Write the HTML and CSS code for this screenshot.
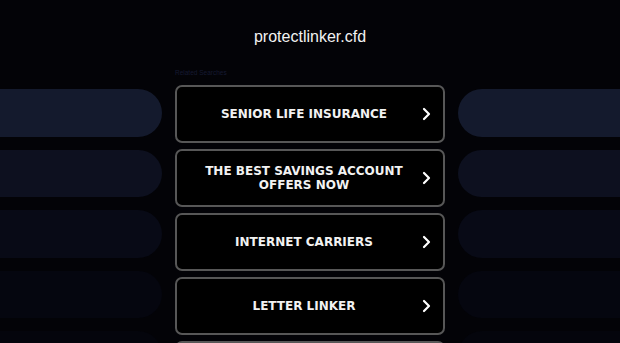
FILE: index.html
```html
<!doctype html>
<html lang="en">
<head>
    <meta charset="utf-8">
    <meta name="viewport" content="width=device-width, initial-scale=1">
    <title>protectlinker.cfd</title>
    <link rel="stylesheet" href="styles.css">
</head>
<body>

    <header class="header">
        <h1 class="domain">protectlinker.cfd</h1>
    </header>

    <div class="layout">
        <div class="side side-left">
            <div class="pill p1"></div>
            <div class="pill p2"></div>
            <div class="pill p3"></div>
            <div class="pill p4"></div>
            <div class="pill p5"></div>
        </div>

        <div class="links">
            <div class="links-title">Related Searches</div>
            <a href="#" class="link-btn">
                <span class="link-text">Senior Life Insurance</span>
                <svg class="chevron" viewBox="0 0 10 14" width="10" height="14"><path d="M3 2 L8 7 L3 12" fill="none" stroke="#fff" stroke-width="2.2" stroke-linecap="round" stroke-linejoin="round"/></svg>
            </a>
            <a href="#" class="link-btn">
                <span class="link-text">The Best Savings Account Offers Now</span>
                <svg class="chevron" viewBox="0 0 10 14" width="10" height="14"><path d="M3 2 L8 7 L3 12" fill="none" stroke="#fff" stroke-width="2.2" stroke-linecap="round" stroke-linejoin="round"/></svg>
            </a>
            <a href="#" class="link-btn">
                <span class="link-text">Internet Carriers</span>
                <svg class="chevron" viewBox="0 0 10 14" width="10" height="14"><path d="M3 2 L8 7 L3 12" fill="none" stroke="#fff" stroke-width="2.2" stroke-linecap="round" stroke-linejoin="round"/></svg>
            </a>
            <a href="#" class="link-btn">
                <span class="link-text">Letter Linker</span>
                <svg class="chevron" viewBox="0 0 10 14" width="10" height="14"><path d="M3 2 L8 7 L3 12" fill="none" stroke="#fff" stroke-width="2.2" stroke-linecap="round" stroke-linejoin="round"/></svg>
            </a>
            <a href="#" class="link-btn"></a>
        </div>

        <div class="side side-right">
            <div class="pill p1"></div>
            <div class="pill p2"></div>
            <div class="pill p3"></div>
            <div class="pill p4"></div>
            <div class="pill p5"></div>
        </div>
    </div>

 </body>
 </html>
```

FILE: styles.css
```css
body {
    font-family: "Liberation Sans", Arial, sans-serif;
    background-color: #030307;
    margin: 0;
    padding: 0;
    height: 343px;
    overflow: hidden;
}

.header {
    padding-top: 28px;
    height: 40px;
    text-align: center;
}

.domain {
    margin: 0;
    font-size: 16px;
    line-height: 18px;
    font-weight: normal;
    color: #f2f2f2;
}

.layout {
    display: grid;
    grid-template-columns: 1fr 270px 1fr;
    column-gap: 13px;
}

.side {
    display: flex;
    flex-direction: column;
    gap: 13px;
    padding-top: 21px;
}

.pill {
    height: 47.5px;
    flex-shrink: 0;
}
.side-left .pill {
    border-radius: 0 24px 24px 0;
}
.side-right .pill {
    border-radius: 24px 0 0 24px;
}

.p1 { background: #141a2d; }
.p2 { background: #0d101f; }
.p3 { background: #080a16; }
.p4 { background: #05060f; }
.p5 { background: #04050c; }

.links {
    display: flex;
    flex-direction: column;
    gap: 6px;
}

.links-title {
    font-size: 6.5px;
    line-height: 10px;
    color: #161a32;
    margin-bottom: 1px;
}

.link-btn {
    display: flex;
    align-items: center;
    height: 58px;
    box-sizing: border-box;
    padding: 0 12px 0 20px;
    border: 2px solid #575757;
    border-radius: 7px;
    background-color: #000;
    text-decoration: none;
    flex-shrink: 0;
}

.link-text {
    flex: 1;
    text-align: center;
    font-family: "DejaVu Sans", Verdana, sans-serif;
    font-weight: bold;
    font-size: 12px;
    line-height: 14px;
    text-transform: uppercase;
    color: #f2f2f2;
}

.chevron {
    margin-left: 10px;
    flex-shrink: 0;
}
```
